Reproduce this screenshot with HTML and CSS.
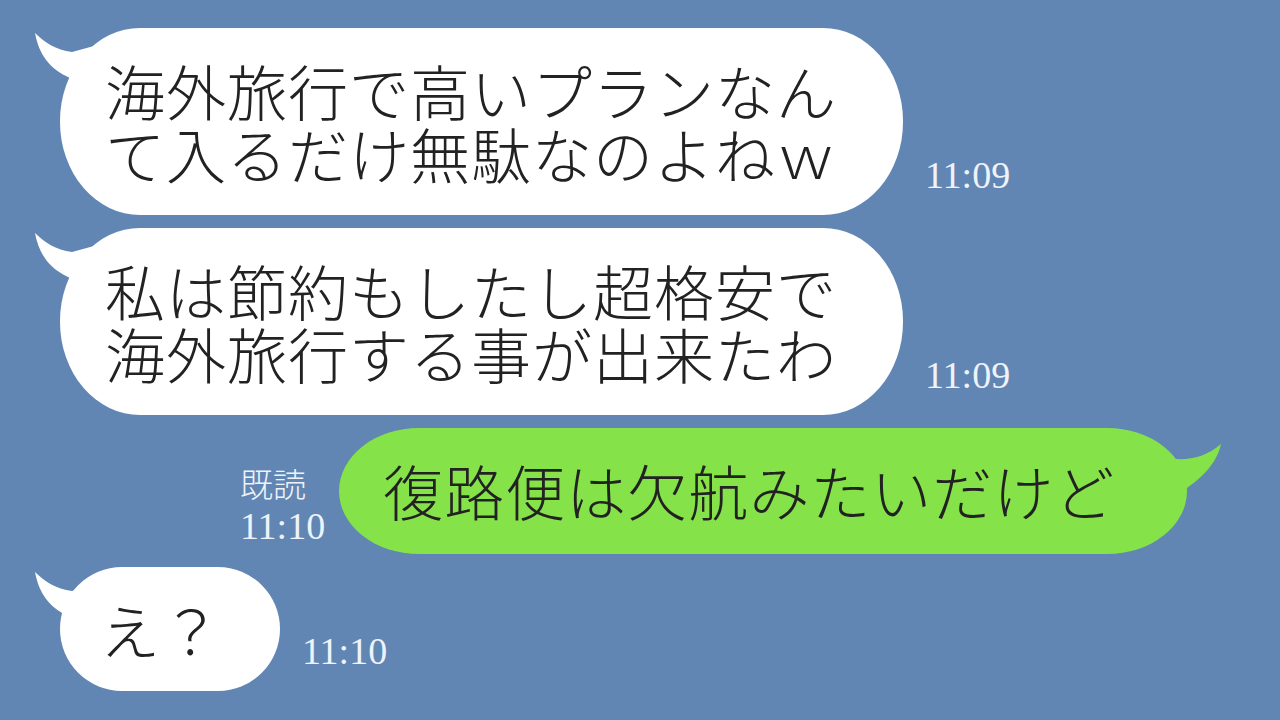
FILE: index.html
```html
<!DOCTYPE html>
<html lang="ja">
<head>
    <meta charset="UTF-8">
    <title>トーク</title>
    <link rel="stylesheet" href="styles.css">
</head>
<body>
    <div class="chat">
        <!-- received -->
        <div class="row">
            <div class="bubble white">
                <svg class="tail-left" viewBox="0 0 64 64"><path d="M5,5 C14,14 26,22 42,24 L64,18 L64,62 L36,48 C20,40 9,27 5,5 Z"/></svg>
                <p>海外旅行で高いプランなん<br>て入るだけ無駄なのよねｗ</p>
            </div>
            <span class="time">11:09</span>
        </div>
        <div class="row">
            <div class="bubble white">
                <svg class="tail-left" viewBox="0 0 64 64"><path d="M5,5 C14,14 26,22 42,24 L64,18 L64,62 L36,48 C20,40 9,27 5,5 Z"/></svg>
                <p>私は節約もしたし超格安で<br>海外旅行する事が出来たわ</p>
            </div>
            <span class="time">11:09</span>
        </div>

        <!-- sent -->
        <div class="row sent">
            <div class="status">
                <span class="read">既読</span>
                <span class="read-time">11:10</span>
            </div>
            <div class="bubble green">
                <svg class="tail-right" viewBox="0 0 80 70"><path d="M74,16 C60,28 45,32 28,31 L10,31 L10,66 L37,62 C55,50 70,35 74,16 Z"/></svg>
                <p>復路便は欠航みたいだけど</p>
            </div>
        </div>

        <div class="row">
            <div class="bubble white short">
                <svg class="tail-left" viewBox="0 0 64 64"><path d="M5,5 C14,14 26,22 42,24 L64,18 L64,62 L36,48 C20,40 9,27 5,5 Z"/></svg>
                <p>え？</p>
            </div>
            <span class="time">11:10</span>
        </div>
    </div>
</body>
</html>
```

FILE: styles.css
```css
body {
    margin: 0;
    background-color: #6286b3;
    font-family: "Noto Sans CJK JP", sans-serif;
}
.chat {
    display: flex;
    flex-direction: column;
    gap: 13px;
    padding: 28px 0 0 60px;
}
.row {
    display: flex;
    align-items: flex-end;
}
.row.sent {
    margin-top: 0;
    margin-left: 180px;
}
.bubble {
    position: relative;
    border-radius: 80px / 93px;
}
.bubble p {
    margin: 0;
    padding: 30px 66px 31px 45px;
    font-size: 60px;
    font-weight: 300;
    line-height: 63px;
    letter-spacing: 1px;
    color: #222;
}
.white {
    background-color: #fff;
    fill: #fff;
}
.green {
    background-color: #85e249;
    fill: #85e249;
    border-radius: 80px / 63px;
}
.green p {
    padding: 30px 72px 33px 44px;
}
.short {
    border-radius: 62px;
}
.short p {
    padding: 30px 58px 31px 40px;
}
.tail-left {
    position: absolute;
    left: -30px;
    top: 0;
    width: 64px;
    height: 64px;
}
.tail-right {
    position: absolute;
    right: -40px;
    top: 0;
    width: 80px;
    height: 70px;
}
.time {
    margin: 0 0 21px 22px;
    font-family: "Liberation Serif", serif;
    font-size: 38px;
    line-height: 38px;
    color: #eef3fa;
}
.status {
    display: flex;
    flex-direction: column;
    margin: 0 14px 8px 0;
    font-family: "Liberation Serif", "Noto Sans CJK JP", serif;
    color: #eef3fa;
}
.read {
    font-size: 33px;
    font-weight: 300;
    line-height: 40px;
}
.read-time {
    font-size: 38px;
    line-height: 40px;
}
```
